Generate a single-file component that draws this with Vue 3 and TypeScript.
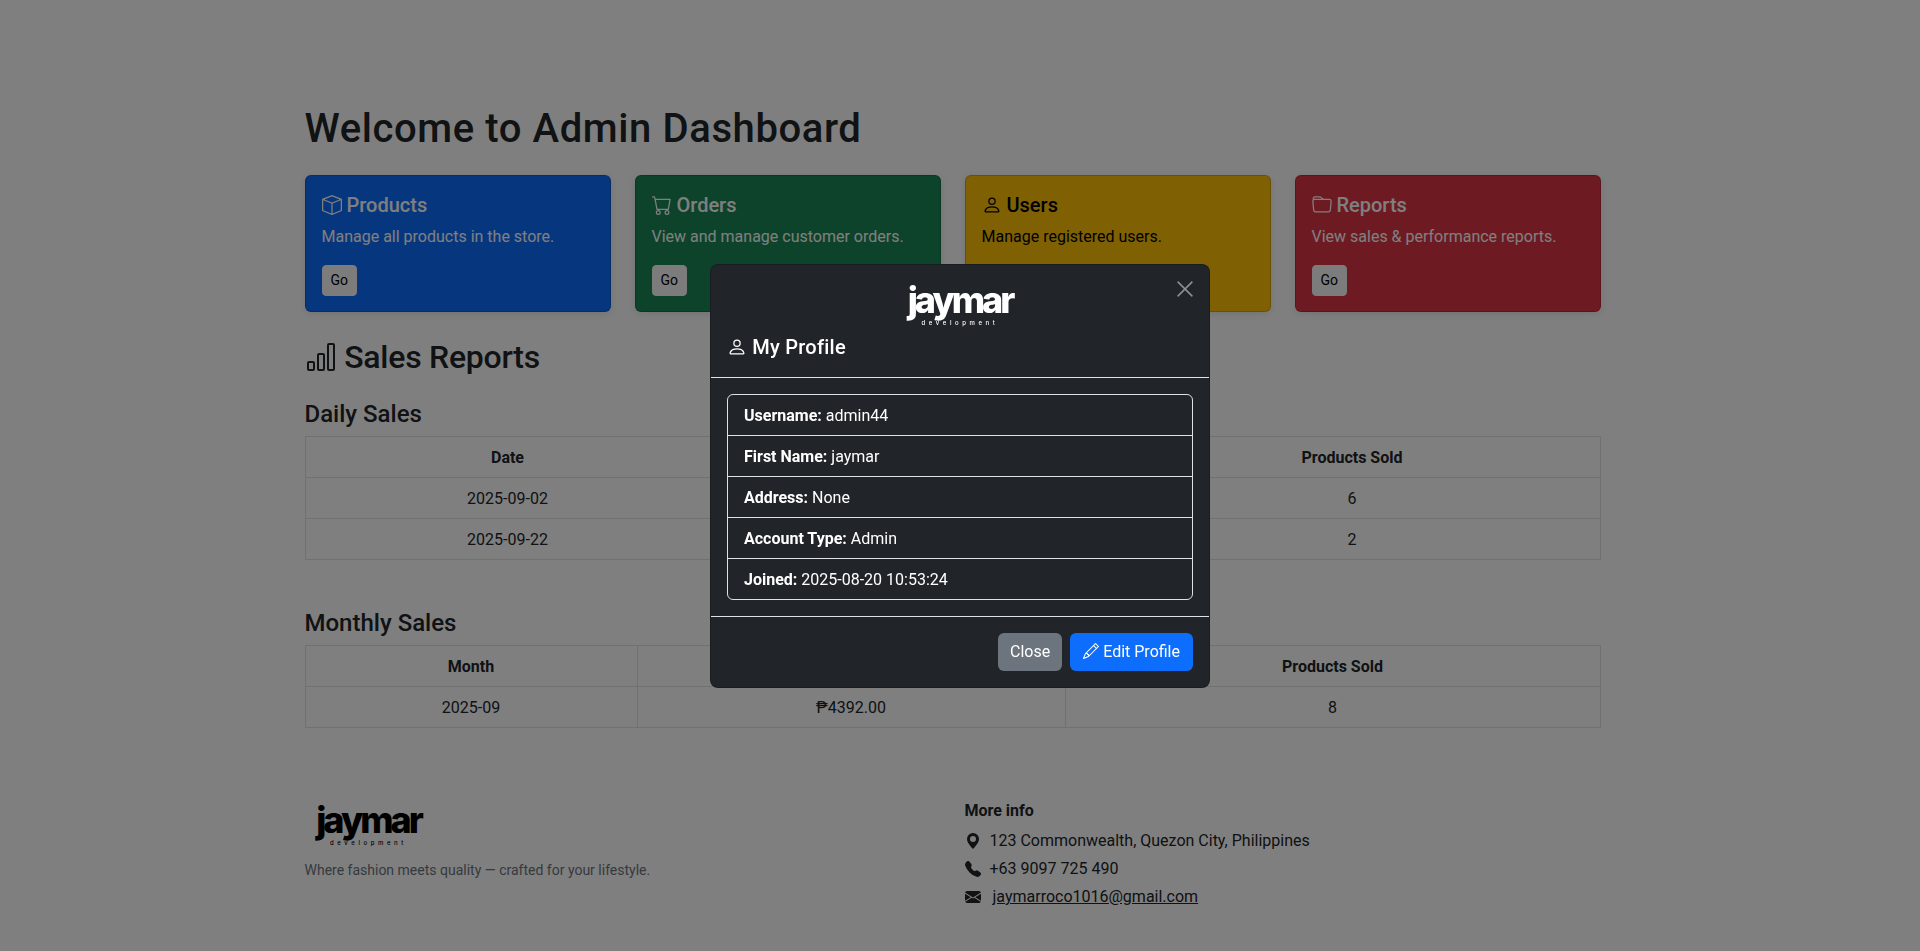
<script setup lang="ts">
const cards = [
  { title: 'Products', text: 'Manage all products in the store.', cls: 'blue', icon: 'box' },
  { title: 'Orders', text: 'View and manage customer orders.', cls: 'green', icon: 'cart' },
  { title: 'Users', text: 'Manage registered users.', cls: 'yellow', icon: 'person' },
  { title: 'Reports', text: 'View sales & performance reports.', cls: 'red', icon: 'folder' },
]
const profile = [
  ['Username:', 'admin44'],
  ['First Name:', 'jaymar'],
  ['Address:', 'None'],
  ['Account Type:', 'Admin'],
  ['Joined:', '2025-08-20 10:53:24'],
]
</script>

<template>
  <div class="page">
    <main class="container">
      <h1>Welcome to Admin Dashboard</h1>
      <div class="cards">
        <div v-for="c in cards" :key="c.title" class="card" :class="c.cls">
          <h5 class="card-title">
            <svg class="ic" viewBox="0 0 16 16" fill="currentColor">
              <path v-if="c.icon === 'box'" d="M8.186 1.113a.5.5 0 0 0-.372 0L1.846 3.5 8 5.961 14.154 3.5zM15 4.239l-6.5 2.6v7.922l6.5-2.6V4.24zM7.5 14.762V6.838L1 4.239v7.925zM7.443.184a1.5 1.5 0 0 1 1.114 0l7.129 2.852A.5.5 0 0 1 16 3.5v8.662a1 1 0 0 1-.629.928l-7.185 2.874a.5.5 0 0 1-.372 0L.63 13.09a1 1 0 0 1-.63-.928V3.5a.5.5 0 0 1 .314-.464z" />
              <path v-else-if="c.icon === 'cart'" d="M0 1.5A.5.5 0 0 1 .5 1H2a.5.5 0 0 1 .485.379L2.89 3H14.5a.5.5 0 0 1 .491.592l-1.5 8A.5.5 0 0 1 13 12H4a.5.5 0 0 1-.491-.408L2.01 3.607 1.61 2H.5a.5.5 0 0 1-.5-.5M3.102 4l1.313 7h8.17l1.313-7zM5 12a2 2 0 1 0 0 4 2 2 0 0 0 0-4m7 0a2 2 0 1 0 0 4 2 2 0 0 0 0-4m-7 1a1 1 0 1 1 0 2 1 1 0 0 1 0-2m7 0a1 1 0 1 1 0 2 1 1 0 0 1 0-2" />
              <path v-else-if="c.icon === 'person'" d="M8 8a3 3 0 1 0 0-6 3 3 0 0 0 0 6m2-3a2 2 0 1 1-4 0 2 2 0 0 1 4 0m4 8c0 1-1 1-1 1H3s-1 0-1-1 1-4 6-4 6 3 6 4m-1-.004c-.001-.246-.154-.986-.832-1.664C11.516 10.68 10.289 10 8 10s-3.516.68-4.168 1.332c-.678.678-.83 1.418-.832 1.664z" />
              <path v-else d="M.54 3.87.5 3a2 2 0 0 1 2-2h3.672a2 2 0 0 1 1.414.586l.828.828A2 2 0 0 0 9.828 3h3.982a2 2 0 0 1 1.992 2.181l-.637 7A2 2 0 0 1 13.174 14H2.826a2 2 0 0 1-1.991-1.819l-.637-7a2 2 0 0 1 .342-1.31zM2.19 4a1 1 0 0 0-.996 1.09l.637 7a1 1 0 0 0 .995.91h10.348a1 1 0 0 0 .995-.91l.637-7A1 1 0 0 0 13.81 4zm4.69-1.707A1 1 0 0 0 6.172 2H2.5a1 1 0 0 0-1 .981l.006.139C1.72 3.042 1.95 3 2.19 3h5.396l-.707-.707z" />
            </svg>
            {{ c.title }}
          </h5>
          <p class="card-text">{{ c.text }}</p>
          <a class="go">Go</a>
        </div>
      </div>

      <h2 class="sales">
        <svg class="ic-lg" viewBox="0 0 16 16" fill="currentColor"><path d="M4 11H2v3h2zm5-4H7v7h2zm5-5v12h-2V2zm-2-1a1 1 0 0 0-1 1v12a1 1 0 0 0 1 1h2a1 1 0 0 0 1-1V2a1 1 0 0 0-1-1zM6 7a1 1 0 0 1 1-1h2a1 1 0 0 1 1 1v7a1 1 0 0 1-1 1H7a1 1 0 0 1-1-1zm-5 4a1 1 0 0 1 1-1h2a1 1 0 0 1 1 1v3a1 1 0 0 1-1 1H2a1 1 0 0 1-1-1z" /></svg>
        Sales Reports
      </h2>

      <h4>Daily Sales</h4>
      <table class="daily">
        <thead><tr><th>Date</th><th>Total Sales</th><th>Products Sold</th></tr></thead>
        <tbody>
          <tr><td>2025-09-02</td><td>₱3192.00</td><td>6</td></tr>
          <tr><td>2025-09-22</td><td>₱1200.00</td><td>2</td></tr>
        </tbody>
      </table>

      <h4 class="monthly-h">Monthly Sales</h4>
      <table class="monthly">
        <thead><tr><th>Month</th><th>Total Sales</th><th>Products Sold</th></tr></thead>
        <tbody><tr><td>2025-09</td><td>₱4392.00</td><td>8</td></tr></tbody>
      </table>

      <footer class="footer">
        <div class="foot-left">
          <div class="logo dark"><span class="logo-main">jaymar</span><span class="logo-sub">development</span></div>
          <p class="tagline">Where fashion meets quality — crafted for your lifestyle.</p>
        </div>
        <div class="foot-right">
          <div class="more">More info</div>
          <div class="info">
            <svg class="fi" viewBox="0 0 16 16" fill="currentColor"><path d="M8 16s6-5.686 6-10A6 6 0 0 0 2 6c0 4.314 6 10 6 10m0-7a3 3 0 1 1 0-6 3 3 0 0 1 0 6" /></svg>
            <span>123 Commonwealth, Quezon City, Philippines</span>
          </div>
          <div class="info">
            <svg class="fi" viewBox="0 0 16 16" fill="currentColor"><path fill-rule="evenodd" d="M1.885.511a1.745 1.745 0 0 1 2.61.163L6.29 2.98c.329.423.445.974.315 1.494l-.547 2.19a.68.68 0 0 0 .178.643l2.457 2.457a.68.68 0 0 0 .644.178l2.189-.547a1.75 1.75 0 0 1 1.494.315l2.306 1.794c.829.645.905 1.87.163 2.611l-1.034 1.034c-.74.74-1.846 1.065-2.877.702a18.6 18.6 0 0 1-7.01-4.42 18.6 18.6 0 0 1-4.42-7.009c-.362-1.03-.037-2.137.703-2.877z" /></svg>
            <span>+63 9097 725 490</span>
          </div>
          <div class="info">
            <svg class="fi" viewBox="0 0 16 16" fill="currentColor"><path d="M.05 3.555A2 2 0 0 1 2 2h12a2 2 0 0 1 1.95 1.555L8 8.414zM0 4.697v7.104l5.803-3.558zM6.761 8.83l-6.57 4.027A2 2 0 0 0 2 14h12a2 2 0 0 0 1.808-1.144l-6.57-4.027L8 9.586zm3.436-.586L16 11.801V4.697z" /></svg>
            <a class="mail">jaymarroco1016@gmail.com</a>
          </div>
        </div>
      </footer>
    </main>

    <div class="backdrop"></div>
    <div class="modal">
      <div class="modal-header">
        <div class="logo light"><span class="logo-main">jaymar</span><span class="logo-sub">development</span></div>
        <svg class="close-x" viewBox="0 0 16 16" fill="none" stroke="currentColor" stroke-width="1.5"><path d="M.6.6l14.8 14.8M15.4.6L.6 15.4" /></svg>
        <h5 class="modal-title">
          <svg class="ic" viewBox="0 0 16 16" fill="currentColor"><path d="M8 8a3 3 0 1 0 0-6 3 3 0 0 0 0 6m2-3a2 2 0 1 1-4 0 2 2 0 0 1 4 0m4 8c0 1-1 1-1 1H3s-1 0-1-1 1-4 6-4 6 3 6 4m-1-.004c-.001-.246-.154-.986-.832-1.664C11.516 10.68 10.289 10 8 10s-3.516.68-4.168 1.332c-.678.678-.83 1.418-.832 1.664z" /></svg>
          My Profile
        </h5>
      </div>
      <div class="modal-body">
        <ul class="list">
          <li v-for="p in profile" :key="p[0]"><strong>{{ p[0] }}</strong> {{ p[1] }}</li>
        </ul>
      </div>
      <div class="modal-footer">
        <button class="btn grey">Close</button>
        <button class="btn primary">
          <svg class="pen" viewBox="0 0 16 16" fill="currentColor"><path d="M12.146.146a.5.5 0 0 1 .708 0l3 3a.5.5 0 0 1 0 .708l-10 10a.5.5 0 0 1-.168.11l-5 2a.5.5 0 0 1-.65-.65l2-5a.5.5 0 0 1 .11-.168zM11.207 2.5 13.5 4.793 14.793 3.5 12.5 1.207zm1.586 3L10.5 3.207 4 9.707V10h.5a.5.5 0 0 1 .5.5v.5h.5a.5.5 0 0 1 .5.5v.5h.293zm-9.761 5.175-.106.106-1.528 3.821 3.821-1.528.106-.106A.5.5 0 0 1 5 12.5V12h-.5a.5.5 0 0 1-.5-.5V11h-.5a.5.5 0 0 1-.468-.325" /></svg>
          Edit Profile
        </button>
      </div>
    </div>
  </div>
</template>

<style>
html, body { margin: 0; background: #fff; }
</style>

<style scoped>
.page {
  font-family: Roboto, "Open Sans", sans-serif;
  font-size: 16px;
  line-height: 1.5;
  color: #212529;
  height: 951px;
  overflow: hidden;
  padding-right: 15px;
}
.container { width: 1296px; margin: 0 auto; padding-top: 105px; }
h1 { font-size: 40px; font-weight: 500; line-height: 1.2; margin: 0 0 22px; letter-spacing: .6px; }
.cards { display: grid; grid-template-columns: repeat(4, 1fr); gap: 24px; }
.card { height: 137px; box-sizing: border-box; padding: 16px; border-radius: 6px; border: 1px solid rgba(0,0,0,.175); color: #fff; box-shadow: 0 2px 8px rgba(0,0,0,.1); }
.blue { background: #0d6efd; }
.green { background: #198754; }
.yellow { background: #ffc107; color: #000; }
.red { background: #dc3545; }
.card-title { font-size: 20px; font-weight: 500; line-height: 1.2; margin: 1px 0 8px; }
.ic { width: 20px; height: 20px; vertical-align: -3px; }
.card-text { font-size: 16px; margin: 0 0 16px; }
.go { display: inline-block; background: #f8f9fa; color: #000; font-size: 14px; line-height: 21px; padding: 4px 8px; border-radius: 4px; border: 1px solid #f8f9fa; }
.sales { font-size: 32px; font-weight: 500; line-height: 1.2; margin: 26px 0 24px; letter-spacing: -.25px; }
.ic-lg { width: 32px; height: 32px; vertical-align: -5px; }
h4 { font-size: 24px; font-weight: 500; line-height: 1.2; margin: 0 0 7px; }
table { width: 100%; table-layout: fixed; border-collapse: collapse; margin-bottom: 16px; text-align: center; }
th, td { box-sizing: border-box; border: 1px solid #dee2e6; padding: 9px 8px 7px; font-size: 16px; line-height: 24px; }
th { font-weight: 700; }
.daily th:nth-child(1) { width: 405px; }
.daily th:nth-child(3) { width: 496px; }
.monthly th:nth-child(1) { width: 332px; }
.monthly th:nth-child(3) { width: 535px; }
.monthly-h { margin-top: 49px; }
.footer { display: grid; grid-template-columns: 1fr 1fr; gap: 0 24px; margin-top: 71px; }
.logo { display: flex; flex-direction: column; align-items: center; width: 110px; font-family: Inter, sans-serif; line-height: 1; }
.logo-main { font-size: 36px; font-weight: 800; letter-spacing: -3px; line-height: 38px; }
.logo-sub { font-size: 6px; letter-spacing: 3.6px; line-height: 8px; font-weight: 500; }
.logo.dark { color: #000; margin: 2px 0 0 9px; }
.logo.light { color: #fff; }
.tagline { font-size: 14px; color: #6c757d; margin: 13px 0 0; }
.more { font-weight: 700; font-size: 16px; margin-bottom: 4px; }
.info { display: flex; align-items: center; gap: 9px; height: 28px; }
.fi { width: 16px; height: 16px; }
.mail { text-decoration: underline; margin-left: 3px; }
.backdrop { position: fixed; inset: 0; background: #000; opacity: .5; }
.modal { position: fixed; top: 264px; left: 710px; width: 500px; box-sizing: border-box; background: #212529; color: #fff; border-radius: 8px; border: 1px solid rgba(0,0,0,.2); }
.modal-header { position: relative; padding: 16px; height: 113px; box-sizing: border-box; border-bottom: 1px solid #dee2e6; display: flex; flex-direction: column; }
.modal-header .logo { align-self: center; }
.close-x { position: absolute; top: 16px; right: 16px; width: 16px; height: 16px; color: #8e9093; }
.modal-title { font-size: 20px; font-weight: 500; line-height: 1.2; margin: 8px 0 0; letter-spacing: .25px; }
.modal-body { padding: 16px; }
.list { list-style: none; margin: 0; padding: 0; border: 1px solid #dee2e6; border-radius: 6px; }
.list li { padding: 9px 16px 7px; line-height: 24px; height: 41px; box-sizing: border-box; border-bottom: 1px solid #dee2e6; }
.list li:last-child { border-bottom: 0; height: 40px; }
.modal-footer { border-top: 1px solid #dee2e6; padding: 16px; display: flex; justify-content: flex-end; gap: 8px; }
.btn { font: inherit; color: #fff; border: 1px solid transparent; padding: 6px 12px; border-radius: 6px; line-height: 24px; }
.grey { background: #6c757d; padding: 6px 11px; }
.primary { background: #0d6efd; }
.pen { width: 16px; height: 16px; vertical-align: -2px; }
</style>
